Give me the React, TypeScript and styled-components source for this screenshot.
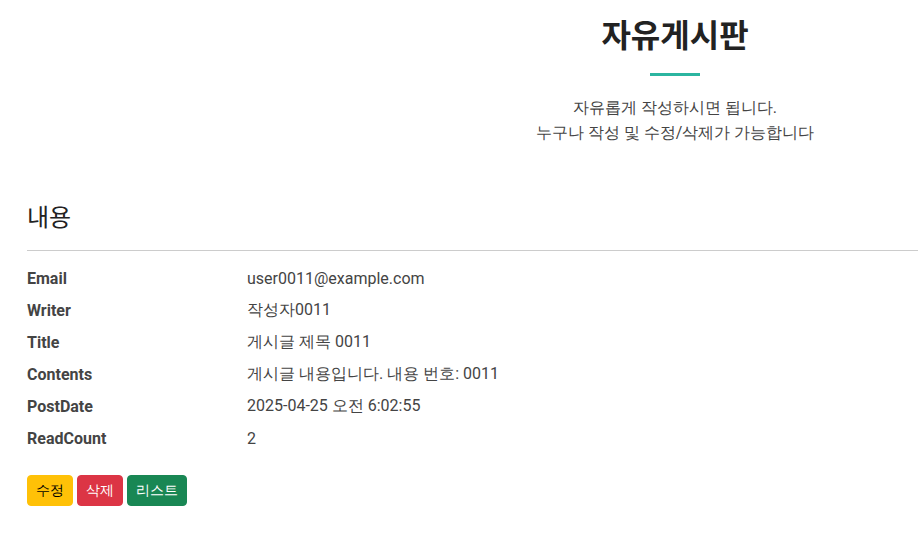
import React from "react";
import styled, { createGlobalStyle } from "styled-components";

const FONT = `Roboto, sans-serif`;
const HEAD_FONT = `Roboto, "Noto Sans CJK KR", sans-serif`;

const Global = createGlobalStyle`
  html, body { margin: 0; padding: 0; background: #fff; }
  body {
    font-family: ${FONT};
    color: #444;
  }
`;

const Page = styled.div`
  width: 918px;
  min-height: 554px;
`;

const Header = styled.header`
  padding: 17px 0 0 432px;
  display: flex;
  flex-direction: column;
  align-items: center;
  text-align: center;
`;

const Title = styled.h1`
  margin: 0;
  font-family: ${HEAD_FONT};
  font-size: 32px;
  line-height: 38px;
  font-weight: 700;
  color: #222;
`;

const Accent = styled.div`
  width: 50px;
  height: 3px;
  background: #2bb5a0;
  margin-top: 18px;
`;

const Sub = styled.p`
  margin: 19px 0 0;
  font-size: 16px;
  line-height: 25px;
  color: #444;
`;

const Main = styled.main`
  padding-left: 27px;
  margin-top: 59px;
`;

const SectionTitle = styled.h2`
  margin: 0;
  font-family: ${HEAD_FONT};
  font-size: 24px;
  line-height: 29px;
  font-weight: 400;
  color: #222;
`;

const Divider = styled.hr`
  margin: 17px 0 11px;
  border: 0;
  border-top: 1px solid #ccc;
  height: 0;
`;

const Info = styled.dl`
  margin: 0;
  display: grid;
  grid-template-columns: 220px 1fr;
  grid-auto-rows: 32px;
  align-items: center;
  font-size: 16px;
`;

const Label = styled.dt`
  font-weight: 700;
  color: #444;
`;

const Value = styled.dd`
  margin: 0;
  color: #444;
`;

const Actions = styled.div`
  display: flex;
  gap: 4px;
  margin-top: 21px;
`;

const variants = {
  warning: { bg: "#ffc107", fg: "#000" },
  danger: { bg: "#dc3545", fg: "#fff" },
  success: { bg: "#198754", fg: "#fff" },
};

const Btn = styled.button<{ $v: keyof typeof variants }>`
  font-family: ${FONT};
  font-size: 14px;
  line-height: 21px;
  padding: 4px 8px;
  border-radius: 4px;
  border: 1px solid ${(p) => variants[p.$v].bg};
  background: ${(p) => variants[p.$v].bg};
  color: ${(p) => variants[p.$v].fg};
  cursor: pointer;
`;

const rows: [string, string][] = [
  ["Email", "user0011@example.com"],
  ["Writer", "작성자0011"],
  ["Title", "게시글 제목 0011"],
  ["Contents", "게시글 내용입니다. 내용 번호: 0011"],
  ["PostDate", "2025-04-25 오전 6:02:55"],
  ["ReadCount", "2"],
];

export default function App() {
  return (
    <Page>
      <Global />
      <Header>
        <Title>자유게시판</Title>
        <Accent />
        <Sub>
          자유롭게 작성하시면 됩니다.
          <br />
          누구나 작성 및 수정/삭제가 가능합니다
        </Sub>
      </Header>
      <Main>
        <SectionTitle>내용</SectionTitle>
        <Divider />
        <Info>
          {rows.map(([k, v]) => (
            <React.Fragment key={k}>
              <Label>{k}</Label>
              <Value>{v}</Value>
            </React.Fragment>
          ))}
        </Info>
        <Actions>
          <Btn $v="warning">수정</Btn>
          <Btn $v="danger">삭제</Btn>
          <Btn $v="success">리스트</Btn>
        </Actions>
      </Main>
    </Page>
  );
}
